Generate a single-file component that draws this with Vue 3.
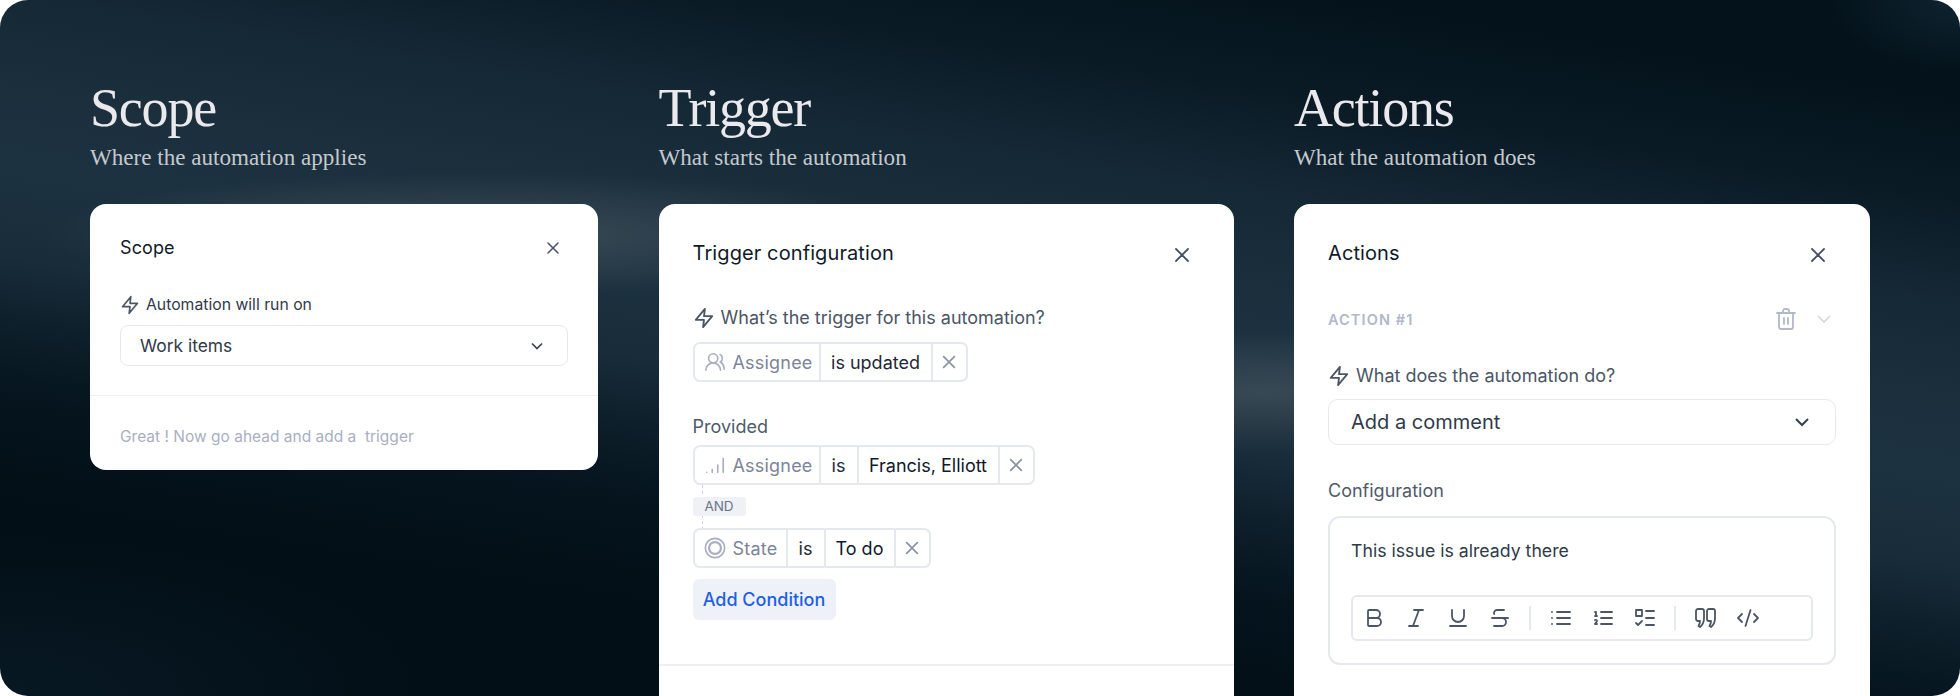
<script setup>
const triggerRow = [
  { text: 'Assignee', icon: 'users', muted: true, w: 126 },
  { text: 'is updated', w: 112 },
]
const assigneeRow = [
  { text: 'Assignee', icon: 'signal', muted: true, w: 126 },
  { text: 'is', w: 38 },
  { text: 'Francis, Elliott', w: 141, strong: true },
]
const stateRow = [
  { text: 'State', icon: 'state', muted: true, w: 93 },
  { text: 'is', w: 38 },
  { text: 'To do', w: 70, strong: true },
]
const conditionRows = [assigneeRow, stateRow]

const toolGroups = [
  [
    ['M6 12h9a4 4 0 0 1 0 8H7a1 1 0 0 1-1-1V5a1 1 0 0 1 1-1h7a4 4 0 0 1 0 8'],
    ['M19 4h-9', 'M14 20H5', 'M15 4 9 20'],
    ['M6 4v6a6 6 0 0 0 12 0V4', 'M4 20h16'],
    ['M16 4H9a3 3 0 0 0-2.830 4', 'M14 12a4 4 0 0 1 0 8H6', 'M4 12h16'],
  ],
  [
    ['M3 6h.01', 'M3 12h.01', 'M3 18h.01', 'M8 6h13', 'M8 12h13', 'M8 18h13'],
    ['M10 6h11', 'M10 12h11', 'M10 18h11', 'M4 6h1v4', 'M4 10h2', 'M6 18H4c0-1 2-2 2-3s-1-1.500-2-1'],
    ['M3 4h6v6H3z', 'm3 17 2 2 4-4', 'M13 5h8', 'M13 12h8', 'M13 19h8'],
  ],
  [
    ['M4 3h4a2 2 0 0 1 2 2v7c0 4-1.500 7-4 9l-1.500-1c1-1.500 1.500-3 1.500-5H4a2 2 0 0 1-2-2V5a2 2 0 0 1 2-2z', 'M15 3h4a2 2 0 0 1 2 2v7c0 4-1.500 7-4 9l-1.500-1c1-1.500 1.500-3 1.500-5h-2a2 2 0 0 1-2-2V5a2 2 0 0 1 2-2z'],
    ['m18 16 4-4-4-4', 'm6 8-4 4 4 4', 'm14.500 4-5 16'],
  ],
]
</script>

<template>
  <div class="page">
    <section class="col col-scope">
      <h1>Scope</h1>
      <p class="sub">Where the automation applies</p>
      <div class="card card-scope">
        <div class="card-head small">
          <h2>Scope</h2>
          <svg class="close" viewBox="0 0 24 24"><path d="M18 6 6 18M6 6l12 12" /></svg>
        </div>
        <div class="label small-label">
          <svg class="bolt" viewBox="0 0 24 24"><path d="M13 2 3 14h9l-1 8 10-12h-9l1-8z" /></svg>
          <span>Automation will run on</span>
        </div>
        <div class="select small-select">
          <span>Work items</span>
          <svg class="chev" viewBox="0 0 24 24"><path d="m6 9 6 6 6-6" /></svg>
        </div>
        <div class="foot">Great ! Now go ahead and add a&nbsp; trigger</div>
      </div>
    </section>

    <section class="col col-trigger">
      <h1>Trigger</h1>
      <p class="sub">What starts the automation</p>
      <div class="card">
        <div class="card-head">
          <h2>Trigger configuration</h2>
          <svg class="close" viewBox="0 0 24 24"><path d="M18 6 6 18M6 6l12 12" /></svg>
        </div>
        <div class="label">
          <svg class="bolt" viewBox="0 0 24 24"><path d="M13 2 3 14h9l-1 8 10-12h-9l1-8z" /></svg>
          <span>What’s the trigger for this automation?</span>
        </div>
        <div class="chips">
          <div v-for="cell in triggerRow" :key="cell.text" class="cell" :class="{ muted: cell.muted }" :style="{ width: cell.w + 'px' }">
            <svg v-if="cell.icon" class="cell-icon" viewBox="0 0 24 24">
              <path d="M18 21a8 8 0 0 0-16 0" /><circle cx="10" cy="8" r="5" /><path d="M22 20c0-3.370-2-6.500-4-8a5 5 0 0 0-.45-8.300" />
            </svg>
            <span>{{ cell.text }}</span>
          </div>
          <div class="cell cell-x"><svg viewBox="0 0 24 24"><path d="M19 5 5 19M5 5l14 14" /></svg></div>
        </div>

        <div class="provided">Provided</div>
        <template v-for="(row, i) in conditionRows" :key="i">
          <div v-if="i > 0" class="and-wrap">
            <span class="and">AND</span>
          </div>
          <div class="chips">
            <div v-for="cell in row" :key="cell.text" class="cell" :class="{ muted: cell.muted, strong: cell.strong }" :style="{ width: cell.w + 'px' }">
              <svg v-if="cell.icon === 'signal'" class="cell-icon" viewBox="0 0 24 24">
                <path d="M3 20h.01M9 20v-3M15 20v-8M21 20V5" />
              </svg>
              <svg v-if="cell.icon === 'state'" class="cell-icon" viewBox="0 0 24 24">
                <circle cx="12" cy="12" r="10.500" /><circle cx="12" cy="12" r="6.500" stroke-width="2.400" />
              </svg>
              <span>{{ cell.text }}</span>
            </div>
            <div class="cell cell-x"><svg viewBox="0 0 24 24"><path d="M19 5 5 19M5 5l14 14" /></svg></div>
          </div>
        </template>
        <button class="add">Add Condition</button>
        <div class="rule"></div>
      </div>
    </section>

    <section class="col col-actions">
      <h1>Actions</h1>
      <p class="sub">What the automation does</p>
      <div class="card">
        <div class="card-head">
          <h2>Actions</h2>
          <svg class="close" viewBox="0 0 24 24"><path d="M18 6 6 18M6 6l12 12" /></svg>
        </div>
        <div class="action-row">
          <span class="action-name">ACTION #1</span>
          <svg class="trash" viewBox="0 0 24 24">
            <path d="M3 6h18M9 6V4a2 2 0 0 1 2-2h2a2 2 0 0 1 2 2v2M5 6h14v14a2 2 0 0 1-2 2H7a2 2 0 0 1-2-2zM10 11v6M14 11v6" />
          </svg>
          <svg class="chev-light" viewBox="0 0 24 24"><path d="m6 9 6 6 6-6" /></svg>
        </div>
        <div class="label label-action">
          <svg class="bolt" viewBox="0 0 24 24"><path d="M13 2 3 14h9l-1 8 10-12h-9l1-8z" /></svg>
          <span>What does the automation do?</span>
        </div>
        <div class="select big-select">
          <span>Add a comment</span>
          <svg class="chev" viewBox="0 0 24 24"><path d="m6 9 6 6 6-6" /></svg>
        </div>
        <div class="conf-label">Configuration</div>
        <div class="editor">
          <p>This issue is already there</p>
          <div class="toolbar">
            <template v-for="(group, g) in toolGroups" :key="g">
              <span v-if="g > 0" class="sep"></span>
              <svg v-for="(icon, n) in group" :key="n" class="tool" viewBox="0 0 24 24">
                <path v-for="d in icon" :key="d" :d="d" />
              </svg>
            </template>
          </div>
        </div>
      </div>
    </section>
  </div>
</template>

<style>
html, body {
  margin: 0;
  background: #fff;
}
</style>

<style scoped>
.page {
  width: 1960px;
  height: 696px;
  box-sizing: border-box;
  padding: 0 90px;
  display: flex;
  overflow: hidden;
  border-radius: 28px;
  font-family: Inter, "Liberation Sans", sans-serif;
  background-color: #020f17;
  background-image:
    radial-gradient(ellipse 440px 62px at 480px 234px, rgba(98, 110, 118, 0.42), rgba(98, 110, 118, 0) 100%),
    radial-gradient(ellipse 300px 62px at 1264px 392px, rgba(98, 110, 118, 0.4), rgba(98, 110, 118, 0) 100%),
    radial-gradient(ellipse 130px 70px at 1960px 0, rgba(24, 52, 70, 0.5), rgba(24, 52, 70, 0) 100%),
    radial-gradient(ellipse 420px 160px at 0 696px, rgba(14, 34, 46, 0.5), rgba(14, 34, 46, 0) 100%),
    linear-gradient(189deg, #04131b 100px, #0a1b26 200px, #152835 300px, #1b2f3d 400px, #1d3240 470px, #182c39 560px, #0e202c 620px, #05141d 700px, #020f17 800px);
}

.col {
  display: flex;
  flex-direction: column;
}
.col-scope { width: 508px; margin-right: 60.500px; }
.col-trigger { width: 575.500px; margin-right: 60px; }
.col-actions { width: 576px; }

h1 {
  margin: 78px 0 0;
  font-family: "Liberation Serif", serif;
  font-weight: 400;
  font-size: 54px;
  line-height: 60px;
  letter-spacing: -1.200px;
  color: #e9e9ee;
}
.sub {
  margin: 0 0 38px;
  padding-top: 10px;
  font-family: "Liberation Serif", serif;
  font-size: 23.100px;
  line-height: 18px;
  color: #c4c9ce;
}

.card {
  flex: none;
  height: 560px;
  box-sizing: border-box;
  padding: 0 34px;
  background: #fff;
  border-radius: 16px;
  color: #1f2937;
}
.card-scope {
  height: 266px;
  padding: 0 30px;
}

.card-head {
  display: flex;
  align-items: center;
  justify-content: space-between;
  height: 44px;
  padding-top: 27px;
}
h2 {
  margin: 0;
  font-size: 20px;
  font-weight: 400;
  letter-spacing: 0.100px;
  color: #0f1a2a;
}
.close {
  width: 24px;
  height: 24px;
  margin: 4px 6px 0 0;
  fill: none;
  stroke: #475166;
  stroke-width: 1.800;
  stroke-linecap: round;
}
.small {
  padding-top: 21px;
}
.small h2 { font-size: 18px; }
.small .close {
  width: 20px;
  height: 20px;
  margin: 2px 5px 0 0;
}

.label {
  display: flex;
  align-items: center;
  gap: 6px;
  margin-top: 31px;
  margin-bottom: 12px;
  font-size: 18px;
  line-height: 24px;
  color: #4b5565;
}
.label-action {
  margin-top: 33px;
  margin-bottom: 0;
}
.small-label {
  margin-top: 24px;
  margin-bottom: 0;
  font-size: 15.750px;
  color: #2f3a4a;
}
.bolt {
  width: 22px;
  height: 22px;
  fill: none;
  stroke: #4b5565;
  stroke-width: 2;
  stroke-linejoin: round;
}
.small-label .bolt {
  width: 20px;
  height: 20px;
}

.select {
  display: flex;
  align-items: center;
  justify-content: space-between;
  box-sizing: border-box;
  border: 1px solid #e6e8f0;
  border-radius: 8px;
  color: #2f3a4a;
}
.small-select {
  height: 41px;
  margin-top: 8px;
  padding: 0 20px 0 19px;
  font-size: 17.400px;
}
.big-select {
  height: 46px;
  margin-top: 11px;
  padding: 0 21px 0 22px;
  border-radius: 10px;
  font-size: 20px;
}
.chev {
  width: 20px;
  height: 20px;
  fill: none;
  stroke: #374151;
  stroke-width: 2;
}
.big-select .chev {
  width: 24px;
  height: 24px;
}

.foot {
  margin: 29px -30px 0;
  padding: 29px 30px 0;
  border-top: 1px solid #eef0f6;
  font-size: 15.500px;
  line-height: 24px;
  color: #a9afc2;
}

.chips {
  display: flex;
  width: fit-content;
  height: 40px;
  box-sizing: border-box;
  border: 2px solid #e6e8f0;
  border-radius: 7px;
  font-size: 18px;
}
.cell {
  display: flex;
  align-items: center;
  justify-content: center;
  gap: 7px;
  box-sizing: border-box;
  border-right: 2px solid #e6e8f0;
  color: #1f2937;
}
.cell.muted {
  justify-content: flex-start;
  padding-left: 9px;
  letter-spacing: 0.200px;
  color: #7c8598;
}
.cell.strong { color: #0f1a2a; }
.cell-x {
  width: 33px;
  border-right: 0;
}
.cell-x svg {
  width: 20px;
  height: 20px;
  fill: none;
  stroke: #8a92a4;
  stroke-width: 2;
}
.cell-icon {
  flex: none;
  width: 22px;
  height: 22px;
  fill: none;
  stroke: #a9afc0;
  stroke-width: 1.800;
  stroke-linecap: round;
}

.provided {
  margin-top: 35px;
  margin-bottom: 8px;
  font-size: 18px;
  line-height: 20px;
  color: #4f5a6b;
}
.and-wrap {
  display: flex;
  align-items: center;
  height: 43px;
  background: repeating-linear-gradient(180deg, #cfd3de 0 3px, transparent 3px 6px) 9px 0 / 1px 100% no-repeat;
}
.and {
  width: 53px;
  height: 19px;
  background: #eff1f6;
  border-radius: 3px;
  font-size: 13.500px;
  line-height: 19px;
  text-align: center;
  color: #6b7487;
}
.add {
  display: block;
  width: 143px;
  height: 41px;
  margin-top: 11px;
  padding: 0;
  border: 0;
  border-radius: 6px;
  background: #eef1f8;
  font-family: inherit;
  font-size: 18px;
  font-weight: 500;
  color: #1f5fe8;
}
.rule {
  height: 2px;
  margin: 44px -34px 0;
  background: #eef0f6;
}

.action-row {
  display: flex;
  align-items: center;
  margin-top: 32px;
  height: 24px;
}
.action-name {
  flex: 1;
  font-size: 14.500px;
  font-weight: 600;
  letter-spacing: 1.100px;
  color: #b2b8c8;
}
.trash {
  width: 24px;
  height: 24px;
  fill: none;
  stroke: #b2b8c8;
  stroke-width: 1.800;
  stroke-linecap: round;
}
.chev-light {
  width: 24px;
  height: 24px;
  margin-left: 14px;
  fill: none;
  stroke: #d3d7e2;
  stroke-width: 1.600;
}

.conf-label {
  margin-top: 36px;
  margin-bottom: 15px;
  font-size: 18px;
  line-height: 20px;
  color: #4f5a6b;
}
.editor {
  height: 149px;
  box-sizing: border-box;
  padding: 21px 21px;
  border: 2px solid #e6e8f0;
  border-radius: 12px;
}
.editor p {
  margin: 0 0 32px;
  font-size: 17.700px;
  line-height: 24px;
  color: #2f3a4a;
}
.toolbar {
  display: flex;
  align-items: center;
  gap: 18px;
  height: 46px;
  box-sizing: border-box;
  padding: 0 9px;
  border: 2px solid #e6e8f0;
  border-radius: 6px;
}
.tool {
  flex: none;
  width: 24px;
  height: 24px;
  fill: none;
  stroke: #4b5565;
  stroke-width: 1.800;
  stroke-linecap: round;
  stroke-linejoin: round;
}
.sep {
  flex: none;
  width: 2px;
  height: 24px;
  margin-left: -1px;
  background: #e6e8f0;
}
</style>
